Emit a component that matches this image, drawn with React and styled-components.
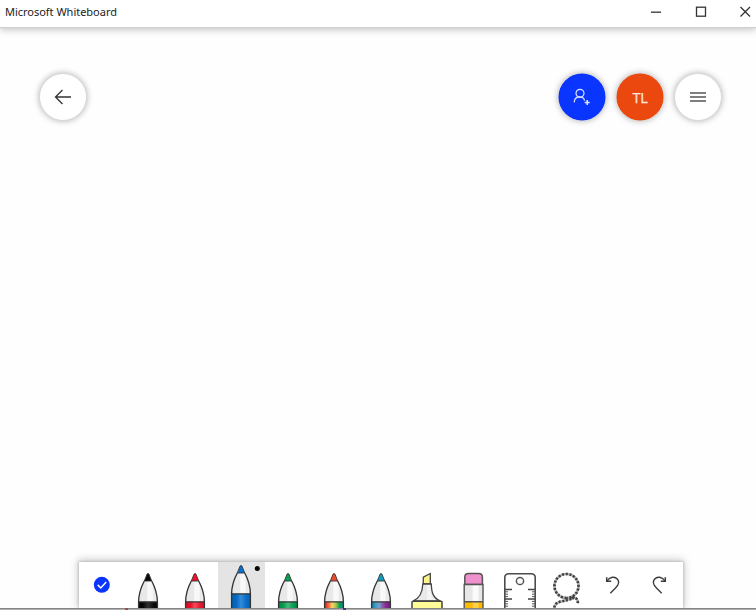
import React from "react";
import styled, { createGlobalStyle } from "styled-components";

const GlobalStyle = createGlobalStyle`
  * { box-sizing: border-box; }
  body { margin: 0; overflow: hidden; font-family: "Noto Sans", "Open Sans", sans-serif; }
  svg { display: block; }
  button { appearance: none; border: 0; padding: 0; margin: 0; font: inherit; }
`;

const Window = styled.div`
  width: 756px;
  height: 610px;
  display: flex;
  flex-direction: column;
  background: #fefefe;
  overflow: hidden;
`;

const TitleBar = styled.header`
  flex: none;
  height: 27px;
  padding: 0 5px;
  display: flex;
  align-items: flex-start;
  justify-content: space-between;
  background: #fff;
  box-shadow: 0 1px 1px #cfcfcf, 0 3px 7px rgba(0, 0, 0, 0.22);
`;

const Title = styled.h1`
  margin: 0;
  font: 400 11px/23px "Noto Sans", sans-serif;
  letter-spacing: -0.02px;
  color: #222;
  white-space: nowrap;
`;

const WindowControls = styled.div`
  display: flex;
  gap: 32.5px;
  padding-top: 6px;
`;

const ControlButton = styled.button`
  width: 12px;
  height: 12px;
  background: none;
  color: #333;
`;

const ActionBar = styled.nav`
  flex: none;
  display: flex;
  align-items: center;
  gap: 12px;
  padding: 47px 35px 0 40px;
`;

const RoundButton = styled.button`
  width: 46px;
  height: 46px;
  border-radius: 50%;
  display: flex;
  align-items: center;
  justify-content: center;
  background: ${(p) => p.$fill || "#fff"};
  color: ${(p) => p.$ink || "#333"};
  font: 400 15px/46px "Open Sans", sans-serif;
  box-shadow: 0 0 0 ${(p) => (p.$fill ? "0.5px " + p.$fill : "1px #dadada")}, 0 0 6px 1px rgba(0, 0, 0, 0.3);
`;

const Initials = styled.span`
  padding-top: 1px;
  font-size: 14.5px;
  letter-spacing: -0.2px;
  -webkit-text-stroke: 0.25px currentColor;
`;

const Spacer = styled.div`
  flex: 1;
`;

const Canvas = styled.main`
  flex: 1;
`;

const Toolbar = styled.div`
  flex: none;
  width: 604px;
  height: 46px;
  margin-left: 79px;
  display: grid;
  grid-template-columns: repeat(13, 46.46px);
  background: #fff;
  box-shadow: 0 0 2px 1px rgba(0, 0, 0, 0.12), 0 -1px 8px 1px rgba(0, 0, 0, 0.22);
`;

const Tool = styled.button`
  height: 46px;
  min-width: 0;
  overflow: hidden;
  background: ${(p) => (p.$selected ? "#e4e4e4" : "transparent")};
`;

const BottomEdge = styled.footer`
  flex: none;
  height: 2px;
  background: linear-gradient(#858585 50%, #b0b0b0 50%);
  z-index: 1;
  display: flex;
`;

const EdgeMark = styled.span`
  width: 3px;
  height: 2px;
  margin-left: ${(p) => p.$gap}px;
  background: ${(p) => p.$color};
`;

function ToolIcon({ children }) {
  return (
    <svg width="46" height="46" viewBox="0 0 46 46" fill="none">
      {children}
    </svg>
  );
}

function Pen({ id, tip, stops, raised }) {
  return (
    <ToolIcon>
      <defs>
        <linearGradient id={id} x1="13.5" x2="32.5" y1="0" y2="0" gradientUnits="userSpaceOnUse">
          {stops.map((c, i) => (
            <stop key={i} offset={i / (stops.length - 1)} stopColor={c} />
          ))}
        </linearGradient>
        <linearGradient id={id + "-barrel"}>
          <stop stopColor="#e7e7e7" />
          <stop offset=".42" stopColor="#e9e9e9" />
          <stop offset=".5" stopColor="#fafafa" />
          <stop offset=".72" stopColor="#f7f7f7" />
          <stop offset=".8" stopColor="#e8e8e8" />
          <stop offset="1" stopColor="#ededed" />
        </linearGradient>
      </defs>
      <g transform={raised ? "translate(0 -8)" : undefined}>
        <path
          d="M19.3 19 C15.5 26 13.7 33 13.6 39.8 V58 H32.4 V39.8 C32.3 33 30.5 26 26.7 19Z"
          fill={`url(#${id}-barrel)`}
        />
        <path d="M13.6 39.8H32.4V58H13.6Z" fill={`url(#${id})`} />
        <path
          d="M26.7 19C30.5 26 32.3 33 32.4 39.8V58M19.3 19C15.5 26 13.7 33 13.6 39.8V58M13.6 39.8H32.4"
          stroke="#343434"
          strokeWidth="1.35"
        />
        <path d="M19.3 19 22 12.2Q23 10.6 24 12.2L26.7 19Z" fill={tip} stroke="#343434" strokeWidth="0.9" />
      </g>
      {raised && <circle cx="39.3" cy="6.5" r="2.5" fill="#050505" />}
    </ToolIcon>
  );
}

const pens = [
  { id: "black", label: "Black pen", tip: "#080808", stops: ["#000", "#080808", "#303030", "#111", "#000"] },
  { id: "red", label: "Red pen", tip: "#f01028", stops: ["#d80b24", "#e80d28", "#f34b5c", "#e41c33", "#db0d26"] },
  { id: "blue", label: "Blue pen", tip: "#0870ce", stops: ["#0062b6", "#0767c3", "#348bd9", "#0d6ec8", "#0062b6"], raised: true },
  { id: "green", label: "Green pen", tip: "#08a050", stops: ["#008b43", "#059a50", "#48b97e", "#0d9f54", "#008b43"] },
  { id: "rainbow", label: "Rainbow pen", tip: "#ee4a2c", stops: ["#db1737", "#ef6531", "#ffd16b", "#a9c44d", "#00a05c", "#168675"] },
  { id: "galaxy", label: "Galaxy pen", tip: "#149ab8", stops: ["#087c9f", "#3a9bc2", "#769dcc", "#8757a8", "#8a218c", "#563780"] },
];

function Highlighter() {
  return (
    <ToolIcon>
      <path d="M19.3 22V15.2L26.3 11.5V22Z" fill="#fff48b" stroke="#444" strokeWidth="1.3" />
      <path d="M18.8 22H27.3C27.5 30 28.8 36 36.5 39H9C16.5 36 18.5 30 18.8 22Z" fill="#e9e9e9" stroke="#444" strokeWidth="1.3" />
      <path d="M23 23H26C26.3 31 27.5 36 31 38H23Z" fill="#f4f4f4" />
      <path d="M8 50V40Q8 39.2 9 39.2H37Q38 39.2 38 40V50Z" fill="#fffb96" stroke="#444" strokeWidth="1.5" />
    </ToolIcon>
  );
}

function Eraser() {
  return (
    <ToolIcon>
      <g transform="translate(-0.4 0)">
        <path d="M14.2 22.5V15Q14.2 11.5 18 11.5H28Q31.8 11.5 31.8 15V22.5Z" fill="#ee91cc" stroke="#555" strokeWidth="1.5" />
        <path d="M13.6 22.5H32.4V50H13.6Z" fill="#e7e7e7" />
        <path d="M22 22.5H28V39H22Z" fill="#fafafa" />
        <path d="M13.6 39.7H32.4V50H13.6Z" fill="#ffb900" />
        <path d="M22 40H28V50H22Z" fill="#ffd04b" />
        <path d="M13.6 50V22.5H32.4V50M13.6 39.7H32.4" stroke="#555" strokeWidth="1.4" />
      </g>
    </ToolIcon>
  );
}

function Ruler() {
  return (
    <ToolIcon>
      <path d="M7.8 50V15.5Q7.8 11.7 12 11.7H34Q38.2 11.7 38.2 15.5V50" fill="#fff" stroke="#4c4c4c" strokeWidth="1.6" />
      <circle cx="23" cy="19" r="3.6" stroke="#555" strokeWidth="1.5" />
      <path d="M8 27.4H15M38 27.4H31M8 37H15M38 37H31" stroke="#444" strokeWidth="1.5" />
      <path d="M8 29.8H11M8 32.2H11M8 34.6H11M8 39.4H11M8 41.8H11M8 44.2H11M38 29.8H35M38 32.2H35M38 34.6H35M38 39.4H35M38 41.8H35M38 44.2H35" stroke="#555" />
    </ToolIcon>
  );
}

function Lasso() {
  const rope =
    "M22.4 36A12 12 0 1 1 22.6 36M30 34.5C26.5 38.5 22 38.2 17 39.5C12.5 40.6 10.5 42.5 10.3 46M28 36.3C32 35 34.2 37.5 33.8 41.5";
  return (
    <ToolIcon>
      <path d={rope} stroke="#b0b0b0" strokeWidth="2.6" />
      <path d={rope} stroke="#3d3d3d" strokeWidth="2.6" strokeDasharray="1.9 1.75" />
    </ToolIcon>
  );
}

function Undo({ flip }) {
  return (
    <ToolIcon>
      <g transform={flip ? "translate(46 0) scale(-1 1)" : undefined} stroke="#3b3b3b" strokeWidth="1.35">
        <path d="M17 19C20 14.5 25 14.2 27.5 17.2C30 20.2 28.5 23 25.5 26L20.3 31.2" />
        <path d="M16.7 15.3V19.3H21.2" strokeWidth="1.5" />
      </g>
    </ToolIcon>
  );
}

export default function App() {
  return (
    <>
      <GlobalStyle />
      <Window>
        <TitleBar>
          <Title>Microsoft Whiteboard</Title>
          <WindowControls>
            <ControlButton aria-label="Minimize">
              <svg width="12" height="12"><path d="M1 6.2H11" stroke="currentColor" strokeWidth="1.3" /></svg>
            </ControlButton>
            <ControlButton aria-label="Maximize">
              <svg width="12" height="12"><rect x="1.5" y="1.2" width="9" height="9" fill="none" stroke="currentColor" strokeWidth="1.3" /></svg>
            </ControlButton>
            <ControlButton aria-label="Close">
              <svg width="12" height="12"><path d="M1.5 1L11 10.5M11 1L1.5 10.5" stroke="currentColor" strokeWidth="1.3" /></svg>
            </ControlButton>
          </WindowControls>
        </TitleBar>

        <ActionBar>
          <RoundButton aria-label="Back">
            <svg width="18" height="18" fill="none" stroke="currentColor" strokeWidth="1.3">
              <path d="M17 9H1.5M8.5 2L1.5 9L8.5 16" />
            </svg>
          </RoundButton>
          <Spacer />
          <RoundButton aria-label="Invite someone" $fill="#0a35ff" $ink="#dce3ff">
            <svg width="18" height="18" fill="none" stroke="currentColor" strokeWidth="1.2">
              <circle cx="7" cy="5.3" r="4" />
              <path d="M1.2 14.4C1.5 7.5 10 7.2 11.6 12.5" />
              <path d="M14.2 12V17M11.7 14.5H16.7" strokeWidth="1.6" />
            </svg>
          </RoundButton>
          <RoundButton aria-label="Account TL" $fill="#ea480e" $ink="#ffe9df">
            <Initials>TL</Initials>
          </RoundButton>
          <RoundButton aria-label="Menu">
            <svg width="16" height="12"><path d="M0 2H16M0 6H16M0 10H16" stroke="#555" strokeWidth="1.7" /></svg>
          </RoundButton>
        </ActionBar>

        <Canvas />

        <Toolbar role="toolbar">
          <Tool aria-label="Done inking">
            <ToolIcon>
              <circle cx="22.8" cy="22.8" r="8" fill="#0a35ff" />
              <path d="M18.7 22.9L21.8 26L27.2 20" stroke="#fff" strokeWidth="1.5" />
            </ToolIcon>
          </Tool>
          {pens.map(({ label, ...pen }) => (
            <Tool key={pen.id} aria-label={label} $selected={pen.raised}>
              <Pen {...pen} />
            </Tool>
          ))}
          <Tool aria-label="Highlighter"><Highlighter /></Tool>
          <Tool aria-label="Eraser"><Eraser /></Tool>
          <Tool aria-label="Ruler"><Ruler /></Tool>
          <Tool aria-label="Lasso select"><Lasso /></Tool>
          <Tool aria-label="Undo"><Undo /></Tool>
          <Tool aria-label="Redo"><Undo flip /></Tool>
        </Toolbar>
        <BottomEdge>
          <EdgeMark $gap={125} $color="#9b4c4c" />
          <EdgeMark $gap={215} $color="#3a3a99" />
        </BottomEdge>
      </Window>
    </>
  );
}
